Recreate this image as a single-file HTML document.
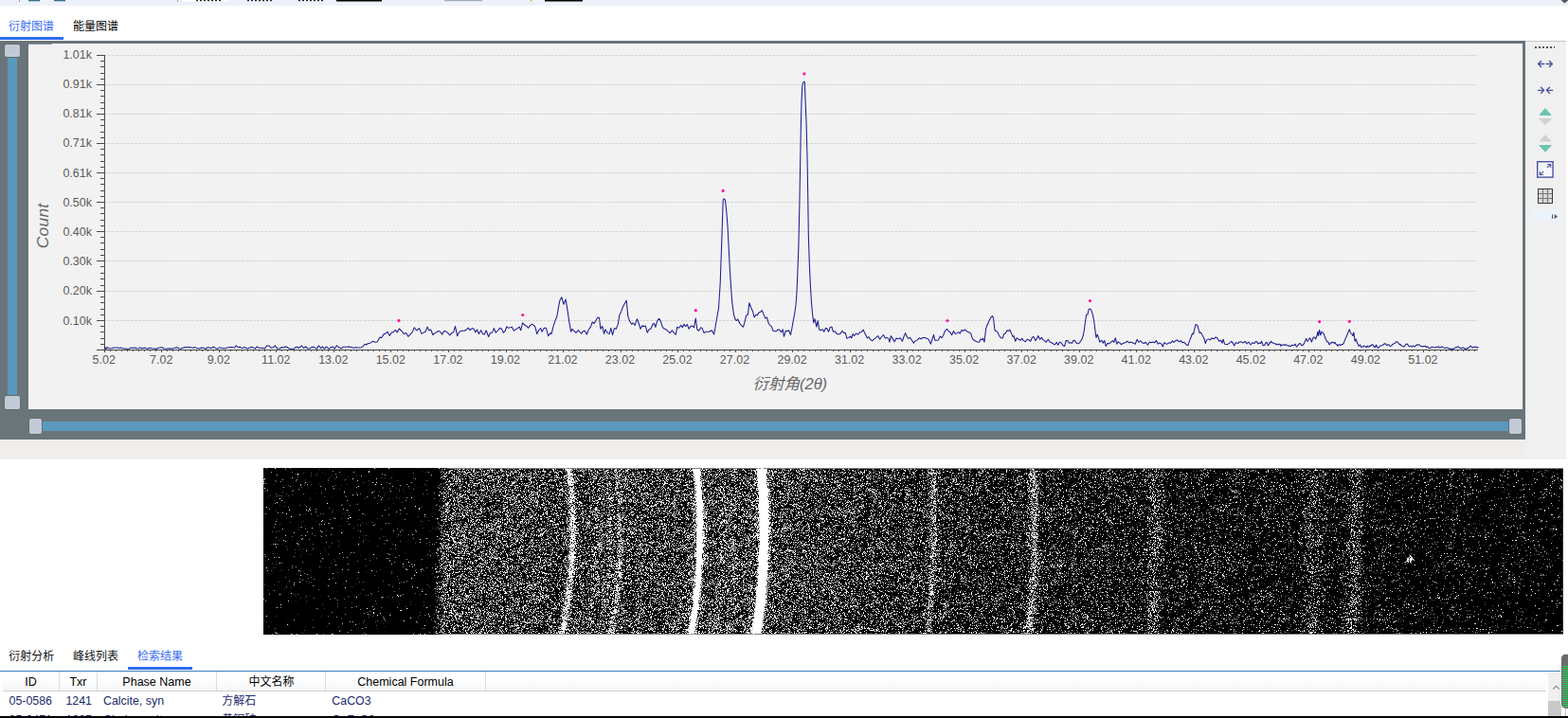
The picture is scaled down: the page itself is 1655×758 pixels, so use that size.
<!DOCTYPE html>
<html lang="zh"><head><meta charset="utf-8"><title>XRD</title>
<style>
html,body{margin:0;padding:0;background:#fff}
body{width:1655px;height:758px;position:relative;overflow:hidden;font-family:"Liberation Sans",sans-serif;font-size:12px;color:#000}
.abs{position:absolute}
svg{position:absolute;display:block;overflow:hidden}
svg text{font-family:"Liberation Sans","Noto Sans CJK SC",sans-serif}
#topstrip{left:0;top:0;width:1655px;height:6px;background:#edf2fa}
#tabul{left:0;top:39px;width:67px;height:3px;background:#2f6bf2}
#frame{left:0;top:43px;width:1610px;height:421px;background:#6a757a}
#plot{left:30px;top:46px;width:1577px;height:386px;background:#f2f2f2}
#notch1{left:30px;top:46px;width:25px;height:1px;background:#8d9599}
#notch2{left:30px;top:431px;width:25px;height:1px;background:#fafafa}
.track{background:#5a99bd}
.thumb{background:#c3cad7;border:1px solid #626c72;box-sizing:border-box;border-radius:3px}
#tools{left:1610px;top:43px;width:43px;height:442px;background:#f0f0f0;border-top:1px solid #c4c4c4;box-sizing:border-box}
#gap{left:0;top:464px;width:1610px;height:21px;background:#f0eeed}
#btul{left:135px;top:704px;width:68px;height:3px;background:#2f6bf2}
#tbltop{left:0;top:708px;width:1655px;height:1px;background:#3f7dbd}
#thead{left:3px;top:709px;width:1629px;height:20px;background:linear-gradient(#ffffff 35%,#f5f6f8 100%);border-bottom:1px solid #d0d0d0}
.th{position:absolute;top:0;height:20px;line-height:23px;text-align:center;font-size:12.5px;color:#000;border-right:1px solid #dcdcdc;box-sizing:border-box;white-space:nowrap}
.td{position:absolute;font-size:12.4px;color:#1c2a6e;white-space:nowrap;line-height:14px}
#sbar{left:1634px;top:710px;width:14px;height:46px;background:#f0f0f0}
#sthumb{left:1634px;top:740px;width:14px;height:16px;background:#c9c9c9}
#bottombar{left:0;top:756px;width:1655px;height:2px;background:#000}
</style></head><body>

<div class="abs" id="topstrip"></div>
<svg style="left:0;top:0" width="1655" height="6" viewBox="0 0 1655 6">
<rect x="20" y="0" width="1" height="2" fill="#9aa0a8"/><rect x="187" y="0" width="1" height="2" fill="#9aa0a8"/>
<rect x="30" y="0" width="12" height="1.3" fill="#3d6b88"/><rect x="57" y="0" width="12" height="1.3" fill="#3d6b88"/>
<rect x="193" y="0" width="48" height="1.5" fill="#fff"/>
<rect x="207" y="0" width="2" height="1.2" fill="#222"/>
<rect x="211" y="0" width="2" height="1.2" fill="#222"/>
<rect x="215" y="0" width="2" height="1.2" fill="#222"/>
<rect x="219" y="0" width="2" height="1.2" fill="#222"/>
<rect x="223" y="0" width="2" height="1.2" fill="#222"/>
<rect x="227" y="0" width="2" height="1.2" fill="#222"/>
<rect x="231" y="0" width="2" height="1.2" fill="#222"/>
<rect x="261" y="0" width="2" height="1.2" fill="#222"/>
<rect x="265" y="0" width="2" height="1.2" fill="#222"/>
<rect x="269" y="0" width="2" height="1.2" fill="#222"/>
<rect x="273" y="0" width="2" height="1.2" fill="#222"/>
<rect x="277" y="0" width="2" height="1.2" fill="#222"/>
<rect x="281" y="0" width="2" height="1.2" fill="#222"/>
<rect x="285" y="0" width="2" height="1.2" fill="#222"/>
<rect x="315" y="0" width="2" height="1.2" fill="#222"/>
<rect x="319" y="0" width="2" height="1.2" fill="#222"/>
<rect x="323" y="0" width="2" height="1.2" fill="#222"/>
<rect x="327" y="0" width="2" height="1.2" fill="#222"/>
<rect x="331" y="0" width="2" height="1.2" fill="#222"/>
<rect x="335" y="0" width="2" height="1.2" fill="#222"/>
<rect x="339" y="0" width="2" height="1.2" fill="#222"/>
<rect x="355" y="0" width="48" height="1.5" fill="#000"/><rect x="469" y="0" width="40" height="1.2" fill="#a4a9bd"/>
<rect x="560" y="0" width="1" height="1.5" fill="#f08020"/><rect x="575" y="0" width="40" height="1.5" fill="#000"/>
<path d="M1647.5 0H1655V0.5L1651.5 3.6Z" fill="#555"/>
</svg>
<svg style="left:0;top:6px" width="400" height="36" viewBox="0 6 400 36">
<text x="9" y="32" font-size="12" fill="#3a6df0">衍射图谱</text>
<text x="77" y="32" font-size="12" fill="#000">能量图谱</text>
</svg>
<div class="abs" id="tabul"></div>
<div class="abs" id="frame"></div>
<div class="abs" id="plot"></div>
<div class="abs" id="notch1"></div><div class="abs" id="notch2"></div>
<div class="abs track" style="left:8px;top:55px;width:10px;height:370px"></div>
<div class="abs thumb" style="left:4px;top:46px;width:18px;height:15px"></div>
<div class="abs thumb" style="left:4px;top:417px;width:18px;height:16px"></div>
<div class="abs track" style="left:38px;top:445px;width:1560px;height:10px"></div>
<div class="abs thumb" style="left:30px;top:441px;width:15px;height:18px"></div>
<div class="abs thumb" style="left:1592px;top:441px;width:15px;height:18px"></div>
<svg id="chart" style="left:30px;top:46px" width="1577" height="386" viewBox="30 46 1577 386">
<path d="M110.04 58.5H1559M110.04 89.5H1559M110.04 120.5H1559M110.04 151.5H1559M110.04 182.5H1559M110.04 213.5H1559M110.04 244.5H1559M110.04 275.5H1559M110.04 307.5H1559M110.04 338.5H1559" stroke="#d3d3d3" stroke-width="1" stroke-dasharray="2.75 1.28" fill="none"/>
<path d="M110.5 58V370M102 369.5H1560M102 58.5H110.5M106 64.5H110.5M106 70.5H110.5M106 77.5H110.5M106 83.5H110.5M102 89.5H110.5M106 95.5H110.5M106 101.5H110.5M106 108.5H110.5M106 114.5H110.5M102 120.5H110.5M106 126.5H110.5M106 132.5H110.5M106 139.5H110.5M106 145.5H110.5M102 151.5H110.5M106 157.5H110.5M106 163.5H110.5M106 170.5H110.5M106 176.5H110.5M102 182.5H110.5M106 188.5H110.5M106 194.5H110.5M106 201.5H110.5M106 207.5H110.5M102 213.5H110.5M106 219.5H110.5M106 225.5H110.5M106 232.5H110.5M106 238.5H110.5M102 244.5H110.5M106 250.5H110.5M106 256.5H110.5M106 263.5H110.5M106 269.5H110.5M102 275.5H110.5M106 281.5H110.5M106 288.5H110.5M106 294.5H110.5M106 301.5H110.5M102 307.5H110.5M106 313.5H110.5M106 319.5H110.5M106 326.5H110.5M106 332.5H110.5M102 338.5H110.5M106 344.5H110.5M106 350.5H110.5M106 357.5H110.5M106 363.5H110.5M110.5 369.5V372M170.5 369.5V372M231.5 369.5V372M291.5 369.5V372M352.5 369.5V372M412.5 369.5V372M473.5 369.5V372M534.5 369.5V372M594.5 369.5V372M655.5 369.5V372M715.5 369.5V372M776.5 369.5V372M836.5 369.5V372M897.5 369.5V372M957.5 369.5V372M1018.5 369.5V372M1078.5 369.5V372M1139.5 369.5V372M1199.5 369.5V372M1260.5 369.5V372M1320.5 369.5V372M1381.5 369.5V372M1441.5 369.5V372M1502.5 369.5V372M116.5 369.5V371M122.5 369.5V371M128.5 369.5V371M134.5 369.5V371M140.5 369.5V371M146.5 369.5V371M152.5 369.5V371M158.5 369.5V371M164.5 369.5V371M176.5 369.5V371M182.5 369.5V371M188.5 369.5V371M195.5 369.5V371M201.5 369.5V371M207.5 369.5V371M213.5 369.5V371M219.5 369.5V371M225.5 369.5V371M237.5 369.5V371M243.5 369.5V371M249.5 369.5V371M255.5 369.5V371M261.5 369.5V371M267.5 369.5V371M273.5 369.5V371M279.5 369.5V371M285.5 369.5V371M297.5 369.5V371M303.5 369.5V371M310.5 369.5V371M316.5 369.5V371M322.5 369.5V371M328.5 369.5V371M334.5 369.5V371M340.5 369.5V371M346.5 369.5V371M358.5 369.5V371M364.5 369.5V371M370.5 369.5V371M376.5 369.5V371M382.5 369.5V371M388.5 369.5V371M394.5 369.5V371M400.5 369.5V371M406.5 369.5V371M419.5 369.5V371M425.5 369.5V371M431.5 369.5V371M437.5 369.5V371M443.5 369.5V371M449.5 369.5V371M455.5 369.5V371M461.5 369.5V371M467.5 369.5V371M479.5 369.5V371M485.5 369.5V371M491.5 369.5V371M497.5 369.5V371M503.5 369.5V371M509.5 369.5V371M515.5 369.5V371M521.5 369.5V371M527.5 369.5V371M540.5 369.5V371M546.5 369.5V371M552.5 369.5V371M558.5 369.5V371M564.5 369.5V371M570.5 369.5V371M576.5 369.5V371M582.5 369.5V371M588.5 369.5V371M600.5 369.5V371M606.5 369.5V371M612.5 369.5V371M618.5 369.5V371M624.5 369.5V371M630.5 369.5V371M636.5 369.5V371M642.5 369.5V371M649.5 369.5V371M661.5 369.5V371M667.5 369.5V371M673.5 369.5V371M679.5 369.5V371M685.5 369.5V371M691.5 369.5V371M697.5 369.5V371M703.5 369.5V371M709.5 369.5V371M721.5 369.5V371M727.5 369.5V371M733.5 369.5V371M739.5 369.5V371M745.5 369.5V371M751.5 369.5V371M757.5 369.5V371M764.5 369.5V371M770.5 369.5V371M782.5 369.5V371M788.5 369.5V371M794.5 369.5V371M800.5 369.5V371M806.5 369.5V371M812.5 369.5V371M818.5 369.5V371M824.5 369.5V371M830.5 369.5V371M842.5 369.5V371M848.5 369.5V371M854.5 369.5V371M860.5 369.5V371M866.5 369.5V371M872.5 369.5V371M879.5 369.5V371M885.5 369.5V371M891.5 369.5V371M903.5 369.5V371M909.5 369.5V371M915.5 369.5V371M921.5 369.5V371M927.5 369.5V371M933.5 369.5V371M939.5 369.5V371M945.5 369.5V371M951.5 369.5V371M963.5 369.5V371M969.5 369.5V371M975.5 369.5V371M981.5 369.5V371M987.5 369.5V371M994.5 369.5V371M1000.5 369.5V371M1006.5 369.5V371M1012.5 369.5V371M1024.5 369.5V371M1030.5 369.5V371M1036.5 369.5V371M1042.5 369.5V371M1048.5 369.5V371M1054.5 369.5V371M1060.5 369.5V371M1066.5 369.5V371M1072.5 369.5V371M1084.5 369.5V371M1090.5 369.5V371M1096.5 369.5V371M1102.5 369.5V371M1109.5 369.5V371M1115.5 369.5V371M1121.5 369.5V371M1127.5 369.5V371M1133.5 369.5V371M1145.5 369.5V371M1151.5 369.5V371M1157.5 369.5V371M1163.5 369.5V371M1169.5 369.5V371M1175.5 369.5V371M1181.5 369.5V371M1187.5 369.5V371M1193.5 369.5V371M1205.5 369.5V371M1211.5 369.5V371M1217.5 369.5V371M1224.5 369.5V371M1230.5 369.5V371M1236.5 369.5V371M1242.5 369.5V371M1248.5 369.5V371M1254.5 369.5V371M1266.5 369.5V371M1272.5 369.5V371M1278.5 369.5V371M1284.5 369.5V371M1290.5 369.5V371M1296.5 369.5V371M1302.5 369.5V371M1308.5 369.5V371M1314.5 369.5V371M1326.5 369.5V371M1333.5 369.5V371M1339.5 369.5V371M1345.5 369.5V371M1351.5 369.5V371M1357.5 369.5V371M1363.5 369.5V371M1369.5 369.5V371M1375.5 369.5V371M1387.5 369.5V371M1393.5 369.5V371M1399.5 369.5V371M1405.5 369.5V371M1411.5 369.5V371M1417.5 369.5V371M1423.5 369.5V371M1429.5 369.5V371M1435.5 369.5V371M1448.5 369.5V371M1454.5 369.5V371M1460.5 369.5V371M1466.5 369.5V371M1472.5 369.5V371M1478.5 369.5V371M1484.5 369.5V371M1490.5 369.5V371M1496.5 369.5V371M1508.5 369.5V371M1514.5 369.5V371M1520.5 369.5V371M1526.5 369.5V371M1532.5 369.5V371M1538.5 369.5V371M1544.5 369.5V371M1550.5 369.5V371M1556.5 369.5V371" stroke="#4a4a4a" stroke-width="1" fill="none" shape-rendering="crispEdges"/>
<g font-size="12.5" fill="#5a5a5a">
<text x="97" y="61.8" text-anchor="end">1.01k</text>
<text x="97" y="93.0" text-anchor="end">0.91k</text>
<text x="97" y="124.2" text-anchor="end">0.81k</text>
<text x="97" y="155.3" text-anchor="end">0.71k</text>
<text x="97" y="186.6" text-anchor="end">0.61k</text>
<text x="97" y="217.8" text-anchor="end">0.50k</text>
<text x="97" y="248.9" text-anchor="end">0.40k</text>
<text x="97" y="280.1" text-anchor="end">0.30k</text>
<text x="97" y="311.4" text-anchor="end">0.20k</text>
<text x="97" y="342.6" text-anchor="end">0.10k</text>
<text x="109.7" y="384" text-anchor="middle">5.02</text>
<text x="170.2" y="384" text-anchor="middle">7.02</text>
<text x="230.8" y="384" text-anchor="middle">9.02</text>
<text x="291.3" y="384" text-anchor="middle">11.02</text>
<text x="351.8" y="384" text-anchor="middle">13.02</text>
<text x="412.3" y="384" text-anchor="middle">15.02</text>
<text x="472.9" y="384" text-anchor="middle">17.02</text>
<text x="533.4" y="384" text-anchor="middle">19.02</text>
<text x="593.9" y="384" text-anchor="middle">21.02</text>
<text x="654.5" y="384" text-anchor="middle">23.02</text>
<text x="715.0" y="384" text-anchor="middle">25.02</text>
<text x="775.5" y="384" text-anchor="middle">27.02</text>
<text x="836.1" y="384" text-anchor="middle">29.02</text>
<text x="896.6" y="384" text-anchor="middle">31.02</text>
<text x="957.1" y="384" text-anchor="middle">33.02</text>
<text x="1017.6" y="384" text-anchor="middle">35.02</text>
<text x="1078.2" y="384" text-anchor="middle">37.02</text>
<text x="1138.7" y="384" text-anchor="middle">39.02</text>
<text x="1199.2" y="384" text-anchor="middle">41.02</text>
<text x="1259.8" y="384" text-anchor="middle">43.02</text>
<text x="1320.3" y="384" text-anchor="middle">45.02</text>
<text x="1380.8" y="384" text-anchor="middle">47.02</text>
<text x="1441.4" y="384" text-anchor="middle">49.02</text>
<text x="1501.9" y="384" text-anchor="middle">51.02</text>
</g>
<text transform="translate(50.8 238.4) rotate(-90)" text-anchor="middle" font-size="17.4" letter-spacing="0.25" font-style="italic" fill="#676767">Count</text>
<text x="794.5" y="411.3" font-size="16.5" font-style="italic" fill="#666">衍射角(2θ)</text>
<polyline fill="none" stroke="#1c1c90" stroke-width="1.05" stroke-linejoin="round" points="110.5,365.6 111.8,368.6 113.2,366.6 114.5,367.5 116.3,368 117.9,367.8 119.9,367 122,367 124,367 125.7,367.6 128.1,367.1 130,368 132.5,367.9 134.5,368.5 136.2,368.3 138.1,367.1 139.8,367.4 142.2,367.1 144.4,367.9 146.3,367.8 148,366.9 149.8,368 151.8,367.3 154,367.6 155.9,368.2 158.2,367.2 160.4,367.7 162.9,368.1 164.8,368.5 166.5,367.5 168.8,366.9 170.9,366.7 173.2,368.1 175.4,368.3 177.3,368 179.5,367.7 181.5,368.2 184.1,367.5 186.3,366.7 188.6,367.8 191.2,368.2 193.1,367.3 195.4,366.5 197.4,366.8 199.2,366.6 201.5,366.7 203.4,367.3 205.8,366.6 207.9,367.6 210.4,368.1 212.8,367 214.9,367.2 217.3,368.4 219.1,366.7 220.9,366.9 223,367.6 224.9,366.3 226.9,367.1 229.1,368.4 231.4,366.9 233.6,367.3 235.2,367.8 237.6,367.7 240,367.1 242,366.5 244.2,366.4 245.9,366.7 247.7,367 249.3,364.9 251.1,366.4 253,366.2 255.5,367.6 257.3,366.7 259.2,367 260.9,368.1 263.5,367.2 265.6,366.3 267.3,366.9 269.2,368.1 270.9,366.1 273.5,367.3 275.2,367.4 276.9,367.3 279.4,368.1 281.7,364.9 283.7,364.9 286.1,367.3 288.4,366.8 290.3,364.9 292.9,368.1 295.3,368 297.6,366.5 299.7,366.8 301.3,366 303.2,366.5 305.5,368.3 307.6,368.3 310.2,368.3 312.1,366.4 313.9,366.3 315.8,367.5 318.3,364.9 320.3,367.5 322.7,366 325,368.2 327.4,367.8 329.5,366.2 331.8,366.6 334.2,368.4 336.2,364.9 338.8,367.7 340.6,366 342.3,368.2 344.7,366 347.1,368.4 349.4,366.6 351.5,366 353.2,368.3 355.4,364.9 357.9,366.8 360.4,367.9 362.2,366.3 364.1,366.2 366.3,366.3 368.3,365.9 370.8,366.5 372.9,367.2 375.4,366.7 377.9,366.9 380,367 381.7,366.7 383.4,365.4 385.1,363.2 386.5,364 388.7,362.5 390.9,362.2 393.1,360.3 396,361.3 398.1,361.1 401,356 402.5,356.7 405.4,352.4 406.8,352.4 409,350.2 411.2,354.5 413.4,350.9 414.8,350.9 417.4,348.3 419.2,350.9 421.3,347 423.5,349 426.4,352.4 428.6,351.6 430.8,355.3 432.9,353.1 435.1,350.9 437.3,345.8 439.5,348.7 440.9,348 442.6,346.6 445,352.4 447.4,350.9 448.9,350.2 451.1,345.1 452.8,348.7 454.7,348 456.9,353.5 459,351.6 462.7,349.5 464.8,350.2 466.7,353.1 468.7,349.5 470.6,349.7 472.8,351.6 474.7,353.8 476.9,351.2 478.6,350.9 480.5,344.4 482.7,354.8 484.4,350.9 486.6,349.2 490.2,349.2 492.4,348 494.3,346.1 496,348.7 498.2,346.6 500.1,347.3 501.8,350.9 503.6,348 505.4,352.6 507.6,348.7 509.5,352.4 511.2,353.1 513.1,348.7 515.6,355.5 517.5,351.6 519.5,350.9 521.4,346.6 523.3,351.2 525,349.5 527.6,346.3 529.4,347.3 531.5,351.2 533,349.7 534.9,344.8 536.6,346.3 538.8,345.8 540.2,345.1 542.4,349.2 544.6,347.6 548.2,345.1 549.7,348.7 551.6,340.8 554,343.4 555.5,343.9 557.6,346.3 559.8,343.4 561.6,342.2 563.4,343.4 564.9,345.1 566.8,352.6 568.5,348.7 570.7,346.6 572.1,350.2 574.3,346.3 576.5,346.3 578.7,354.8 580.8,351.6 582,352.6 583.7,345.8 585.9,338.6 587.7,335 589.5,324.1 591,316.8 592.9,313.9 594.9,321.2 597.1,316.1 599,327.7 600.7,339.3 602.6,350.2 604,347.3 605.9,349.5 608,351.3 610.3,348.7 611.7,350.2 613.6,352.1 615.5,349.5 617.3,349.2 619.4,353.1 621.3,348 623.3,345.4 625.2,340 627.1,341.5 628.9,338.6 630.7,335.2 632.5,335.2 633.9,347.3 635.8,344.4 637.6,352.4 639,347.7 641.2,351.6 643.1,352.6 644.8,346.3 646.5,353.5 648.4,346.6 650.3,347.3 652.1,342.9 653.9,332.8 655.7,328.9 657.6,323.6 659.3,320.5 661.2,317.3 662.9,334.2 664.4,338.6 666.6,342.2 668.3,341 670.2,343.4 672.4,336.7 673.8,340 676,347.3 677.9,343.7 679.6,344.8 681.3,343.9 683.2,351.2 685.1,347.7 686.9,347.3 689,342.2 690.5,341.5 691.9,345.4 693.8,338.6 695.6,336.4 697.3,339 699.2,345.1 700.6,346.8 702.8,347.7 705,349.7 707.2,351.6 709.3,348.7 711.5,351.6 713.3,353.1 714.7,345.4 716.6,346.3 718.8,343.4 720.2,345.8 722,342.2 723.5,344.8 725.3,342.5 727.2,347.3 728.9,344.4 730.4,343.9 732.5,345.8 734.3,336.1 735.9,348 737.6,349.2 739.8,345.8 741.2,346.6 743.1,351.6 744.9,350.2 748.5,350.2 751.4,348.7 753.6,353.1 755.4,343 757,334 758.5,325.2 760.2,299.1 761.8,254 763.2,211 764.3,209.8 765.4,211 766.7,222 768,239 769.2,262 770.4,285 771.6,304 772.7,318.1 773.6,326 774.4,331.1 775.3,335 776.2,337.5 777.5,338.5 778.8,337 780.8,341.5 782.6,343.7 784.5,345.1 786.2,339.3 787.6,333.2 789.4,332.1 790.8,319.7 792.7,324.8 794.5,328.4 796.1,335 797.8,332.3 799.2,332.8 801.1,329.9 802.9,329.2 804.3,327.7 806.1,332.1 807.9,336.1 809.4,335 811.3,341.5 813,343.7 814.5,344.8 815.9,349.2 818.1,349.7 819.5,349.7 821.4,347.7 823.2,348.7 824.6,350.9 826.1,347.7 827.5,355.3 829.3,349.2 830.7,349.7 832.6,348.7 834.5,353.5 835.9,346.6 837,340 838.8,330.8 840,322 840.8,312 841.8,290 842.9,260 843.9,215 844.8,165 845.4,131 846.1,104.6 846.8,91 847.6,87.5 848.7,86.1 849.4,87 850,104.6 851.1,131 852,165 852.7,205 853.3,247.5 854.3,278 855.4,301.7 856.4,318 857.5,330.8 858.5,339 858.6,340.8 860,336.7 861.8,345.1 863.2,338.6 864.7,348 866.1,348.7 868.3,347.7 869.7,350.2 871.6,346.3 873.1,347.3 874.5,350.2 876.3,345.4 878,345.1 879.4,350.2 881.3,349.7 882.8,352.1 885,353.1 886.7,352.6 889,349.2 890.8,351.6 892.2,351.2 893.9,357.4 895.8,356.4 897.7,355 898.7,357 900.2,352.6 901.6,354.5 903.8,352.1 905.5,353.1 907.4,350.9 909.3,350.6 911.1,348 913.2,352.6 915.4,357 916.9,355.5 918.6,358.2 920.5,359.9 922.7,357.9 924.8,356.4 926.7,354.5 928.7,358.2 930.6,355.5 932.5,353.5 934.3,357 936,356.4 937.9,357.4 938.9,361.1 940.4,354.5 942.2,357.4 944.1,360.8 946.2,357 948,357.9 950.2,356.7 952.4,360.3 953.8,356 955.6,351.6 957.5,356 958.9,357.4 960.4,356.4 962.5,359.3 964.4,362.2 966.2,359.9 968.3,358.9 970.5,356.7 972.3,357.9 974.1,356.4 976.3,356.4 978.5,357.4 979.9,357.9 982.4,363.2 984.3,357 985.5,353.4 986.8,359.3 988.6,359.3 990.5,358.9 992.3,355 994,356.7 995.9,353.5 997.3,349.5 999.5,347.3 1001.3,349.7 1002.7,350.6 1004.6,353.8 1006.5,349.5 1008.2,352.6 1010,351.6 1011.8,350.6 1013.3,352.1 1015.2,348.3 1016.6,349.5 1018.1,348 1019.8,349.2 1021.6,350.6 1023.4,350.9 1024.9,352.6 1026.3,357.4 1028.2,359.3 1030,360.3 1031.7,361.1 1033.6,361.3 1035,357.9 1036.5,358.9 1037.5,357 1039,361.1 1040.6,347.3 1041.6,343.9 1043,341 1044.5,337.6 1045.9,335.2 1047.4,333.5 1048.5,335.7 1050,348.7 1051.7,349.7 1053.2,350.9 1054.6,354.5 1056.4,356.7 1058.2,357 1059.7,352.6 1061.1,352.1 1062.9,348.7 1064.5,349.5 1065.8,348 1067.4,351.6 1069.1,355.5 1070,354.5 1071.7,360.3 1073.2,356.7 1075.1,358.2 1077,359.3 1078.7,357.4 1080.4,359.6 1082.3,360.8 1084.2,358.2 1086,358.9 1087.7,360.3 1089.6,356 1091,355.5 1092.9,359.6 1094.7,357 1095.8,354.5 1097.6,358.2 1099.3,356.4 1101.2,358.9 1102.6,359.6 1104.1,361.3 1106.3,358.2 1108,361.1 1109.9,361.8 1112.1,363.2 1113.5,363.7 1115.2,361.3 1116.7,364.2 1118.6,361.1 1120.5,362.2 1121.9,364.7 1123.7,365.4 1125.1,359.6 1126.8,359.6 1128.3,362.2 1130.2,361.8 1131.6,362.2 1133.1,359.3 1134.5,359.6 1136.4,362.5 1138.2,362.8 1139.9,361.3 1141.8,358.2 1143.2,354.5 1144.2,349.5 1145.4,340.8 1146.6,332.3 1148,332.1 1149,327 1150.5,326 1151.9,327.7 1153.4,332.1 1154.8,339.3 1155.8,348 1157,356.4 1158.2,353.1 1159.6,356.7 1160.6,361.1 1162.8,359.3 1164.3,362.2 1165.7,359.6 1167.2,365.4 1168.9,362.5 1170.8,362.8 1172.7,361.1 1174.4,359.6 1175.9,361.3 1177.3,356.7 1178.8,363.2 1180.2,360.8 1182,362.2 1183.4,363.7 1185.3,362.5 1187.5,361.8 1190.1,360.3 1191.8,361.8 1194,361.1 1196.2,362.2 1198.3,363.2 1200.1,358.4 1202,361.3 1203.7,359.9 1205.6,361.8 1207.5,362.5 1209.2,361.3 1211.4,364.2 1213.3,361.1 1215,361.8 1216.8,361.1 1218.6,361.8 1220.5,359.6 1222.3,363.2 1224,361.8 1225.9,363.2 1227.3,366.1 1228.8,361.8 1230.2,362.8 1232.1,363.2 1233.9,361.8 1235.6,362.2 1237.5,359.9 1238.9,361.3 1240.8,359.6 1242.6,358.9 1244.3,360.8 1246.2,359.6 1248.1,361.8 1249.8,361.3 1252,363.7 1253.9,364.7 1255.6,359.6 1257.1,356 1258.5,352.1 1259.7,352.6 1261.1,345.8 1262.1,342.5 1264,343.4 1265,347.3 1266.1,351.6 1267.5,350.9 1269,353.8 1270.8,357 1272.3,362.5 1273.7,358.9 1275.6,357.9 1277.4,358.9 1279.1,356.7 1281,357.9 1283.2,356 1284.9,357 1286.8,360.3 1288.7,359.3 1290.1,362.2 1291.1,358.2 1292.6,363.2 1294.5,363.7 1296.2,363.2 1298,361.8 1299.8,360.3 1301.3,362.2 1302,363.6 1302.7,365.1 1304.2,361.8 1305.2,362.1 1306.1,362.2 1306.9,362.4 1307.8,361.1 1308.9,360.9 1310,360.8 1311,361.4 1312,362 1313,361.4 1314,360.5 1315,361.2 1316,363 1317,362 1318,361 1320,364 1321,363 1322,361.5 1323,362.5 1324,362.5 1325,360.8 1326,360.5 1327,361.4 1328,363 1329,362 1330,362.5 1330.8,362 1331.5,360.3 1333.2,364.7 1334.2,364.7 1335.1,364 1336,361.8 1337,361.3 1338.4,364.7 1339.2,364.1 1339.9,361.8 1340.8,361.9 1341.6,360.3 1342.4,361.3 1343.3,361.8 1344.2,362.5 1345.2,362.8 1346.2,362.8 1347.1,364 1348,363.1 1348.9,364 1349.8,363.7 1350.6,363.2 1351.3,363.5 1352,365.4 1353,364.1 1353.9,364 1354.8,363.9 1355.8,364.7 1356.8,363.6 1357.8,364.2 1358.8,364.6 1359.7,365.1 1360.7,365.1 1361.6,365.4 1362.6,365.4 1363.6,364.2 1364.5,364.5 1365.5,364.7 1366.2,364.2 1367,363.2 1367.7,364.6 1368.4,366.1 1369.3,365.3 1370.3,364 1371.2,363.2 1372.1,362.5 1372.9,363.2 1373.8,364.7 1374.8,364.8 1375.7,363.2 1376.4,363 1377.1,361.1 1378.6,357.4 1379.3,359.5 1380,360.3 1380.8,359.5 1381.5,357.9 1382.2,357.1 1382.9,357 1384.4,361.1 1385.8,357 1386.5,356 1387.3,356 1388,356.6 1388.7,357.9 1390.2,353.8 1390.9,350.2 1391.6,354.5 1392.6,348.3 1393.8,353.8 1395,350.2 1396.4,351.6 1397.4,352.6 1398.9,357.4 1399.6,358.1 1400.3,360.3 1401,361 1401.8,360.8 1403.2,364 1404,362.7 1404.7,361.8 1405.4,362.1 1406.1,361.1 1406.8,361.2 1407.6,361.8 1408.3,362.4 1409,361.3 1409.8,363.1 1410.5,363.7 1411.2,363.7 1411.9,365.4 1412.8,364 1413.8,363.7 1414.7,364.6 1415.6,364 1416.4,363.5 1417.3,363.2 1418,363 1418.7,361.1 1420.2,357.4 1420.9,355.8 1421.6,354.5 1422.8,350.9 1424.3,347.7 1425.4,351.6 1426.9,352.6 1427.9,354.5 1428.9,350.9 1430.1,360.3 1431.2,357.9 1432.7,362.5 1433.4,363.2 1434.1,365.4 1434.8,364.9 1435.6,364 1436.3,365.8 1437,366.6 1437.9,365.9 1438.8,366.1 1439.5,365 1440.2,365.4 1441,365.7 1441.7,366.6 1442.4,366.7 1443.1,365.1 1444,366.1 1444.9,366.1 1445.8,365.1 1446.7,365.4 1447.7,364.1 1448.6,363.7 1449.3,364.2 1450.1,366.1 1450.8,365.7 1451.5,366.9 1452.5,364 1454,367.1 1455,367.1 1455.9,366.1 1456.8,365 1457.6,365.1 1458.7,364.7 1459.8,364 1460.8,363.3 1461.7,362.8 1462.6,362.9 1463.4,364.2 1464.3,364.4 1465.2,363.7 1466.1,363.9 1467,365.4 1468,365.3 1468.9,364.7 1469.8,363.3 1470.7,363.2 1471.6,362.6 1472.4,362.2 1473.3,361 1474.3,360.8 1475.2,361.2 1476.2,362.5 1477.1,363.7 1477.9,363.2 1478.8,364.7 1479.7,365.1 1480.6,365.2 1481.5,366.1 1482.5,365.7 1483.4,364 1484.3,363.1 1485.2,363.2 1486.1,364.1 1486.9,365.4 1487.8,365.9 1488.8,365.1 1489.8,365.9 1490.7,366.1 1491.6,365 1492.4,365.4 1493.5,365.9 1494.6,364.7 1495.5,363.9 1496.5,364.2 1497.3,363.7 1498.2,364 1499.1,365.2 1500,365.4 1500.9,365.4 1501.8,366.1 1502.8,365.4 1503.7,365.4 1504.6,365.2 1505.5,366.6 1506.5,366 1507.6,366.9 1508.7,367.4 1509.8,367.6 1510.9,366.4 1512,366.1 1513.1,366.7 1514.2,366.9 1515.2,366.5 1516.3,366.6 1517.2,366.1 1518.2,365.7 1519.1,367.1 1520,366.9 1521,366.5 1522.1,366.1 1523.2,366.7 1524.3,367.1 1525.4,367.7 1526.5,366.9 1527.6,366.9 1528.7,368 1529.8,367.7 1530.8,368.6 1531.9,369 1533,368 1534.1,368.4 1535.2,367.6 1536.3,366.8 1537.4,366.9 1538.5,365.9 1539.5,366.1 1540.6,367.3 1541.7,367.6 1542.8,368 1543.9,366.9 1545,367.1 1546.1,368.3 1547.2,368.8 1548.2,367.6 1549.3,367.9 1550.4,366.9 1551.3,366.2 1552.2,365.1 1553.1,366 1554,367.1 1555.1,366.3 1556.2,366.9 1557.3,365.9 1558.4,366.6 1559.3,367.2 1560.3,366.1"/>
<g fill="#ff1694"><circle cx="421" cy="338.4" r="1.6"/><circle cx="551.8" cy="332.5" r="1.6"/><circle cx="734.3" cy="327.7" r="1.6"/><circle cx="763.2" cy="201.4" r="1.6"/><circle cx="848.9" cy="77.9" r="1.6"/><circle cx="1000" cy="338.6" r="1.6"/><circle cx="1150.5" cy="317.6" r="1.6"/><circle cx="1392.6" cy="339.6" r="1.6"/><circle cx="1424.3" cy="339.3" r="1.6"/></g>
</svg>
<div class="abs" id="tools"></div>
<svg style="left:1610px;top:44px" width="43" height="200" viewBox="1610 44 43 200">
<rect x="1620" y="49" width="2" height="2" fill="#555"/>
<rect x="1624" y="49" width="2" height="2" fill="#555"/>
<rect x="1628" y="49" width="2" height="2" fill="#555"/>
<rect x="1632" y="49" width="2" height="2" fill="#555"/>
<rect x="1636" y="49" width="2" height="2" fill="#555"/>
<rect x="1640" y="49" width="1" height="2" fill="#555"/>
<g stroke="#4a549e" stroke-width="1.35" fill="none" stroke-linecap="round" stroke-linejoin="round">
<path d="M1623.5 67.5H1629.8M1626.6 64.4L1623.5 67.5L1626.6 70.6M1632.2 67.5H1638.5M1635.4 64.4L1638.5 67.5L1635.4 70.6"/>
<path d="M1623.3 95.3H1629.6M1626.5 92.2L1629.6 95.3L1626.5 98.4M1632.4 95.3H1638.7M1635.5 92.2L1632.4 95.3L1635.5 98.4"/>
</g>
<path d="M1631 114.6L1637 121.4H1625Z" fill="#6cc5b0" stroke="#6cc5b0" stroke-width="1" stroke-linejoin="round"/>
<path d="M1624.6 125.4H1637.4L1631 131.6Z" fill="#d1d1d1" stroke="#d1d1d1" stroke-width="1" stroke-linejoin="round"/>
<path d="M1631 142.8L1637 149H1625Z" fill="#d1d1d1" stroke="#d1d1d1" stroke-width="1" stroke-linejoin="round"/>
<path d="M1624.8 153.6H1637.2L1631 160Z" fill="#6cc5b0" stroke="#6cc5b0" stroke-width="1" stroke-linejoin="round"/>
<rect x="1622.7" y="170.7" width="16.4" height="16.4" fill="#f6f6fb" stroke="#4a549e" stroke-width="1.4"/>
<g stroke="#4a549e" stroke-width="1.05" fill="none" stroke-linecap="butt" stroke-linejoin="miter"><path d="M1632.9 177L1636.6 173.5M1633.2 173.4H1636.7V176.9M1629.1 180.9L1625.4 184.4M1628.8 184.5H1625.3V181"/></g>
<rect x="1623.5" y="199.5" width="15" height="15" fill="#dadada" stroke="#3a3a3a" stroke-width="1"/>
<path d="M1628.5 200V214M1633.5 200V214M1624 204.5H1638M1624 209.5H1638" stroke="#7a7a7a" stroke-width="1.2" fill="none"/>
<rect x="1616" y="221.5" width="31" height="12.5" rx="2" fill="#edf3fc"/>
<rect x="1638" y="226.3" width="1" height="4.6" fill="#555"/><path d="M1640.7 226L1644 228.6L1640.7 231.2Z" fill="#555"/>
</svg>
<div class="abs" id="gap"></div>
<svg id="diff" style="left:278px;top:494px" width="1372" height="176" viewBox="278 494 1372 176">
<defs><radialGradient id="dg" gradientUnits="userSpaceOnUse" cx="75" cy="560" r="1700"><stop offset="0.11941" stop-color="#7b7b7b"/><stop offset="0.23824" stop-color="#7b7b7b"/><stop offset="0.26176" stop-color="#797979"/><stop offset="0.29118" stop-color="#767676"/><stop offset="0.30765" stop-color="#767676"/><stop offset="0.30912" stop-color="#818181"/><stop offset="0.31035" stop-color="#a4a4a4"/><stop offset="0.31259" stop-color="#a4a4a4"/><stop offset="0.31382" stop-color="#828282"/><stop offset="0.31588" stop-color="#787878"/><stop offset="0.32412" stop-color="#767676"/><stop offset="0.32588" stop-color="#808080"/><stop offset="0.32824" stop-color="#808080"/><stop offset="0.33000" stop-color="#777777"/><stop offset="0.33235" stop-color="#777777"/><stop offset="0.33382" stop-color="#848484"/><stop offset="0.33559" stop-color="#848484"/><stop offset="0.33706" stop-color="#797979"/><stop offset="0.33853" stop-color="#797979"/><stop offset="0.34000" stop-color="#8d8d8d"/><stop offset="0.34235" stop-color="#8d8d8d"/><stop offset="0.34412" stop-color="#7a7a7a"/><stop offset="0.35353" stop-color="#767676"/><stop offset="0.35529" stop-color="#7e7e7e"/><stop offset="0.35765" stop-color="#7e7e7e"/><stop offset="0.35941" stop-color="#767676"/><stop offset="0.38294" stop-color="#777777"/><stop offset="0.38618" stop-color="#7e7e7e"/><stop offset="0.38800" stop-color="#8b8b8b"/><stop offset="0.38876" stop-color="#adadad"/><stop offset="0.38929" stop-color="#f2f2f2"/><stop offset="0.39165" stop-color="#f2f2f2"/><stop offset="0.39218" stop-color="#adadad"/><stop offset="0.39306" stop-color="#8b8b8b"/><stop offset="0.39500" stop-color="#808080"/><stop offset="0.39765" stop-color="#797979"/><stop offset="0.40176" stop-color="#797979"/><stop offset="0.40353" stop-color="#828282"/><stop offset="0.40588" stop-color="#828282"/><stop offset="0.40824" stop-color="#7b7b7b"/><stop offset="0.41059" stop-color="#818181"/><stop offset="0.41412" stop-color="#818181"/><stop offset="0.41706" stop-color="#797979"/><stop offset="0.42294" stop-color="#797979"/><stop offset="0.42588" stop-color="#818181"/><stop offset="0.42729" stop-color="#989898"/><stop offset="0.42800" stop-color="#f2f2f2"/><stop offset="0.43259" stop-color="#f2f2f2"/><stop offset="0.43329" stop-color="#989898"/><stop offset="0.43500" stop-color="#818181"/><stop offset="0.43765" stop-color="#787878"/><stop offset="0.46176" stop-color="#767676"/><stop offset="0.48529" stop-color="#737373"/><stop offset="0.51471" stop-color="#707070"/><stop offset="0.53176" stop-color="#6f6f6f"/><stop offset="0.53365" stop-color="#7c7c7c"/><stop offset="0.53471" stop-color="#8b8b8b"/><stop offset="0.53682" stop-color="#8b8b8b"/><stop offset="0.53794" stop-color="#7a7a7a"/><stop offset="0.54059" stop-color="#6f6f6f"/><stop offset="0.54471" stop-color="#6f6f6f"/><stop offset="0.54647" stop-color="#747474"/><stop offset="0.54824" stop-color="#6d6d6d"/><stop offset="0.57353" stop-color="#6b6b6b"/><stop offset="0.59294" stop-color="#6a6a6a"/><stop offset="0.59529" stop-color="#7a7a7a"/><stop offset="0.59665" stop-color="#8d8d8d"/><stop offset="0.59941" stop-color="#8d8d8d"/><stop offset="0.60088" stop-color="#7a7a7a"/><stop offset="0.60294" stop-color="#6a6a6a"/><stop offset="0.63235" stop-color="#686868"/><stop offset="0.66765" stop-color="#646464"/><stop offset="0.67059" stop-color="#717171"/><stop offset="0.67235" stop-color="#7c7c7c"/><stop offset="0.67471" stop-color="#7c7c7c"/><stop offset="0.67647" stop-color="#717171"/><stop offset="0.67941" stop-color="#646464"/><stop offset="0.72059" stop-color="#616161"/><stop offset="0.76176" stop-color="#5e5e5e"/><stop offset="0.76647" stop-color="#696969"/><stop offset="0.77000" stop-color="#717171"/><stop offset="0.77353" stop-color="#717171"/><stop offset="0.77706" stop-color="#686868"/><stop offset="0.78176" stop-color="#5e5e5e"/><stop offset="0.79118" stop-color="#5e5e5e"/><stop offset="0.79412" stop-color="#6f6f6f"/><stop offset="0.79588" stop-color="#797979"/><stop offset="0.79882" stop-color="#797979"/><stop offset="0.80059" stop-color="#6f6f6f"/><stop offset="0.80353" stop-color="#5b5b5b"/><stop offset="0.83824" stop-color="#575757"/><stop offset="0.88529" stop-color="#535353"/><stop offset="0.93235" stop-color="#505050"/></radialGradient>
<radialGradient id="blob"><stop offset="0" stop-color="#adadad"/><stop offset="0.5" stop-color="#8c8c8c"/><stop offset="1" stop-color="#5b5b5b" stop-opacity="0"/></radialGradient>
<filter id="nz" filterUnits="userSpaceOnUse" x="238" y="454" width="1452" height="256" color-interpolation-filters="sRGB">
<feTurbulence type="fractalNoise" baseFrequency="0.8" numOctaves="2" seed="5" result="a"/>
<feTurbulence type="fractalNoise" baseFrequency="0.9" numOctaves="1" seed="11" result="b"/>
<feDisplacementMap in="a" in2="b" scale="40" xChannelSelector="R" yChannelSelector="G" result="n"/>
<feColorMatrix in="n" type="matrix" values="1 0 0 0 0 1 0 0 0 0 1 0 0 0 0 0 0 0 0 1" result="n1"/>
<feComposite in="n1" in2="SourceGraphic" operator="arithmetic" k1="0" k2="1" k3="1" k4="-1" result="s"/>
<feComponentTransfer in="s"><feFuncR type="linear" slope="10"/><feFuncG type="linear" slope="10"/><feFuncB type="linear" slope="10"/></feComponentTransfer>
</filter></defs>
<g filter="url(#nz)"><rect x="278" y="494.5" width="1371.8" height="175.0" fill="url(#dg)"/><circle cx="1488" cy="590.5" r="6" fill="url(#blob)"/><path d="M278 494.5H472.3L467.0 669.5H278Z" fill="#767676"/><path d="M278 494.5H469.3L464.0 669.5H278Z" fill="#6e6e6e"/><path d="M278 494.5H466.8L461.5 669.5H278Z" fill="#656565"/><path d="M278 494.5H464.3L459.0 669.5H278Z" fill="#595959"/><path d="M278 494.5H462.3L457.0 669.5H278Z" fill="#474747"/></g>
</svg>
<svg style="left:0;top:680px" width="400" height="26" viewBox="0 680 400 26">
<text x="9.2" y="697" font-size="12" fill="#111">衍射分析</text>
<text x="77" y="697" font-size="12" fill="#111">峰线列表</text>
<text x="145" y="697" font-size="12" fill="#3a6df0">检索结果</text>
</svg>
<div class="abs" id="btul"></div>
<div class="abs" id="tbltop"></div>
<div class="abs" id="thead">
<div class="th" style="left:0px;width:60px">ID</div>
<div class="th" style="left:60px;width:40px">Txr</div>
<div class="th" style="left:100px;width:126px">Phase Name</div>
<div class="th" style="left:226px;width:115px"></div>
<div class="th" style="left:341px;width:169px">Chemical Formula</div>
</div>
<svg style="left:0;top:709px" width="600" height="49" viewBox="0 709 600 49">
<text x="286.5" y="724" font-size="12" text-anchor="middle" fill="#000">中文名称</text>
<text x="234.3" y="744" font-size="12" fill="#1c2a6e">方解石</text>
<text x="234.3" y="764" font-size="12" fill="#1c2a6e">黄铜矿</text>
</svg>
<div class="td" style="left:9.5px;top:733.2px">05-0586</div>
<div class="td" style="left:69.4px;top:733.2px">1241</div>
<div class="td" style="left:109.0px;top:733.2px">Calcite, syn</div>
<div class="td" style="left:350.3px;top:733.2px">CaCO3</div>
<div class="td" style="left:9.5px;top:753.2px">05-0471</div>
<div class="td" style="left:69.4px;top:753.2px">1237</div>
<div class="td" style="left:109.0px;top:753.2px">Chalcopyrite</div>
<div class="td" style="left:350.3px;top:753.2px">CuFeS2</div>
<div class="abs" id="sbar"></div><div class="abs" id="sthumb"></div>
<svg style="left:1634px;top:715px" width="14" height="20" viewBox="1634 715 14 20"><path d="M1639.2 727.6L1642.5 724.3L1645.8 727.6" stroke="#858585" stroke-width="1.1" fill="none"/></svg>
<svg style="left:1644px;top:688px" width="11" height="70" viewBox="1644 688 11 70">
<rect x="1647.5" y="690.3" width="14" height="58" rx="5" fill="#6a6a6a" stroke="#f4f4f4" stroke-width="1"/>
<path d="M1649 703.5H1656M1649 705.5H1656M1649 707.5H1656M1649 709.5H1656M1649 711.5H1656M1649 713.5H1656M1649 715.5H1656M1649 717.5H1656M1649 719.5H1656M1649 721.5H1656M1649 723.5H1656M1649 725.5H1656M1649 727.5H1656M1649 729.5H1656M1649 731.5H1656M1649 733.5H1656M1649 735.5H1656M1649 737.5H1656M1649 739.5H1656M1649 741.5H1656M1649 743.5H1656M1649 745.5H1656" stroke="#22d158" stroke-width="1" fill="none"/>
<rect x="1652" y="748.5" width="1" height="8" fill="#a6cbe8"/>
</svg>
<div class="abs" id="bottombar"></div>
</body></html>
